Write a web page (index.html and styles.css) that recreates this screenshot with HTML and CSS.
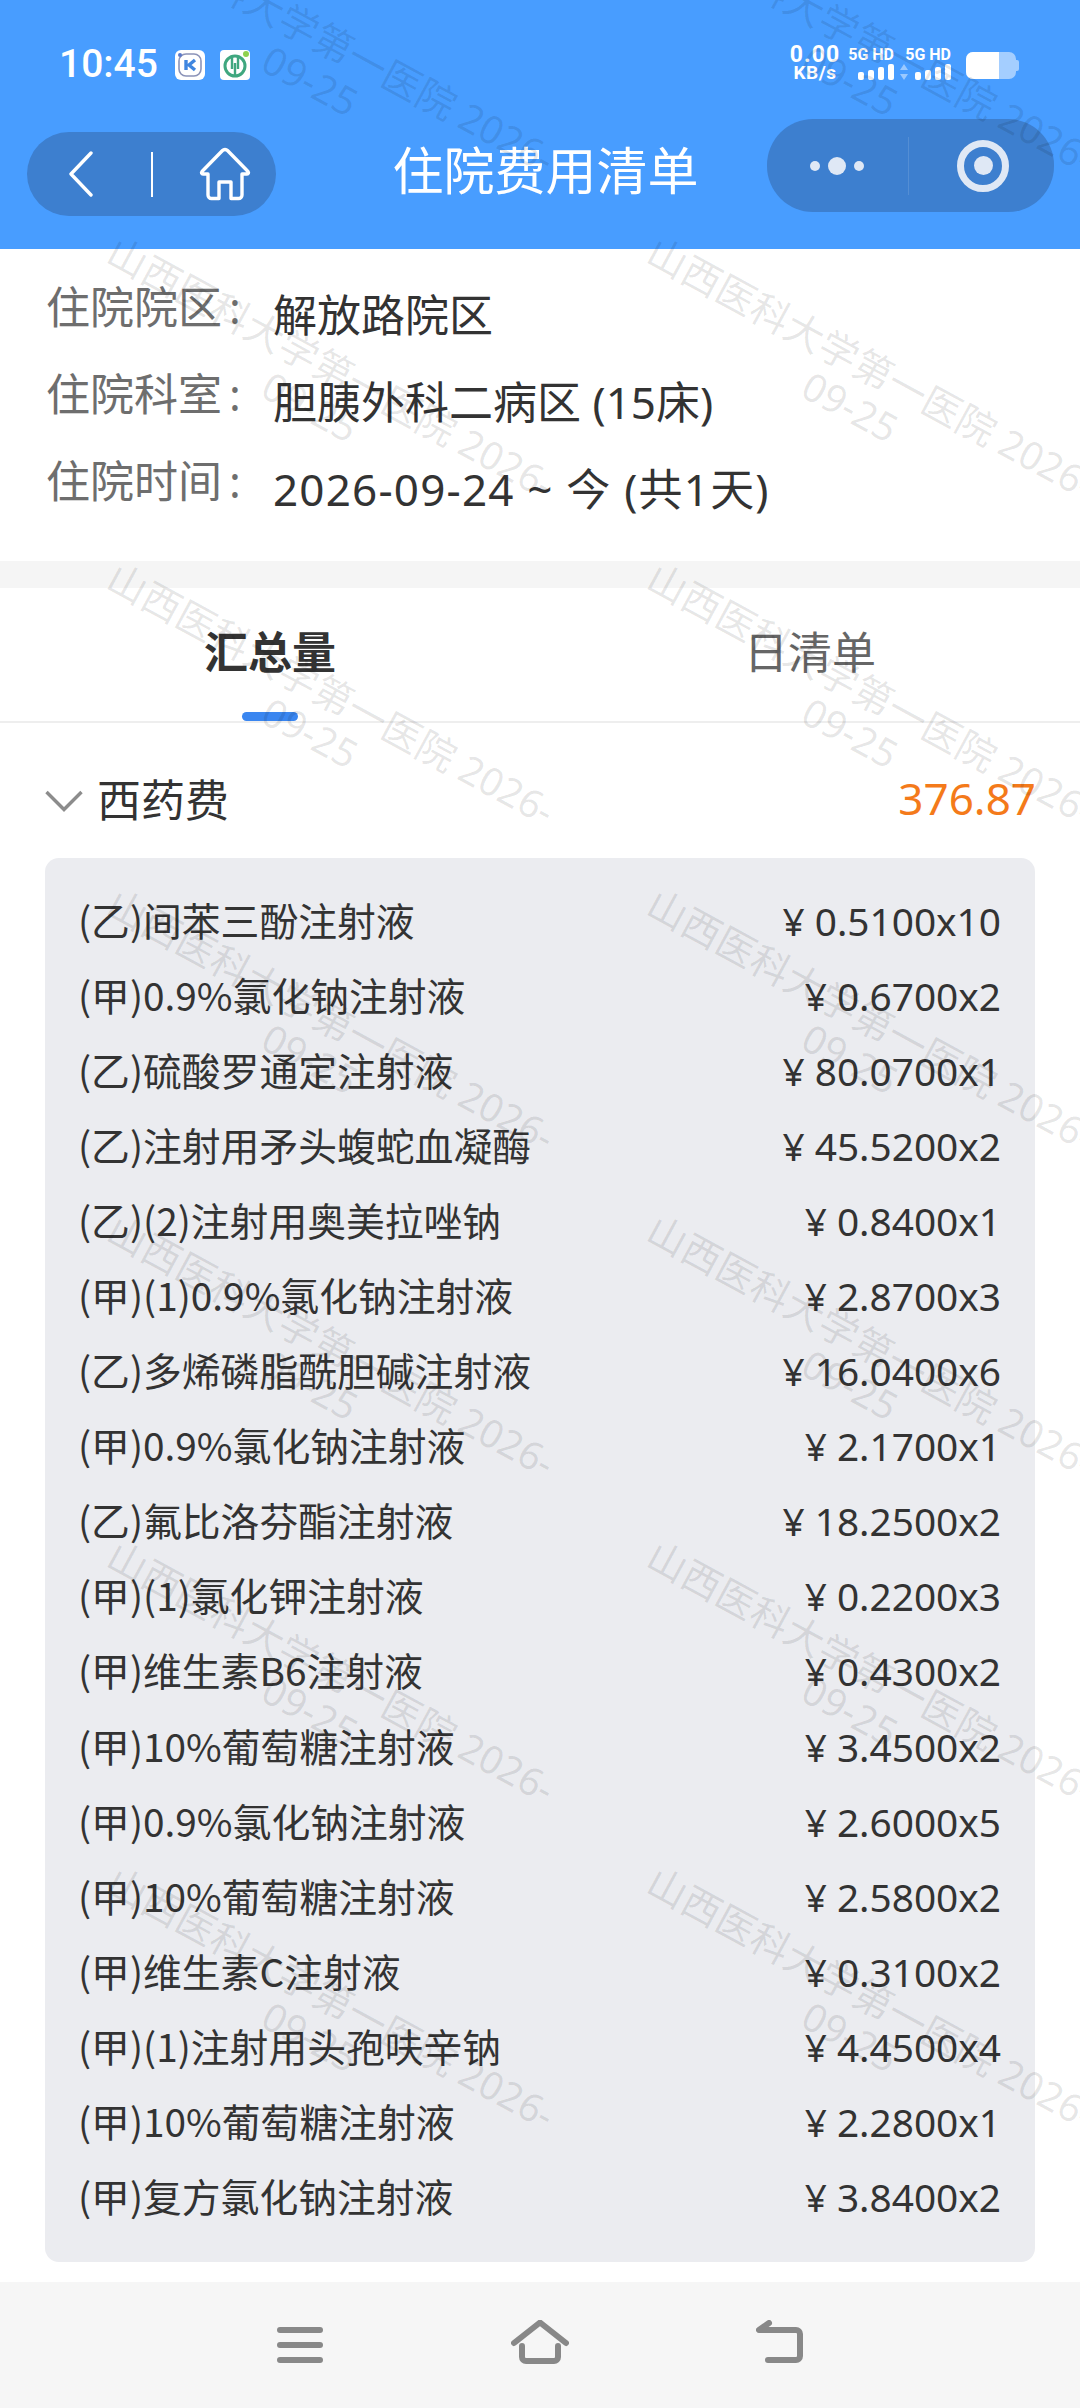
FILE: index.html
```html
<!DOCTYPE html>
<html lang="zh-CN">
<head>
    <meta charset="UTF-8">
    <meta name="viewport" content="width=device-width, initial-scale=1.0">
    <title>住院费用清单</title>
    <link rel="stylesheet" href="styles.css">
</head>
<body>
    <div class="page">
        <header class="top">
            <div class="status-bar">
                <div class="status-left">
                    <span class="time">10:45</span>
                    <svg class="app-icon" viewBox="0 0 30 30">
                        <rect width="30" height="30" rx="6" fill="#fff"/>
                        <rect x="4" y="4" width="22" height="22" rx="7" fill="none" stroke="#8b93b8" stroke-width="1.6"/>
                        <path d="M11 10v10M20 10l-6 5 6 5" fill="none" stroke="#3f86e0" stroke-width="3.4"/>
                        <circle cx="5" cy="5" r="2" fill="#5b79c9"/>
                    </svg>
                    <svg class="app-icon" viewBox="0 0 30 30">
                        <rect width="30" height="30" rx="4" fill="#fff"/>
                        <circle cx="15" cy="16" r="10" fill="none" stroke="#3fa77f" stroke-width="3"/>
                        <path d="M12 7v12M18 7v12M15 13v13" fill="none" stroke="#3fa77f" stroke-width="2.4"/>
                        <circle cx="26" cy="4" r="3" fill="#8fd14f"/>
                    </svg>
                </div>
                <div class="status-right">
                    <div class="speed"><span>0.00</span><span class="speed-unit">KB/s</span></div>
                    <div class="signal">
                        <span class="signal-name">5G HD</span>
                        <span class="bars"><i class="b1"></i><i class="b2"></i><i class="b3"></i><i class="b4"></i></span>
                    </div>
                    <div class="signal">
                        <span class="signal-name">5G HD</span>
                        <span class="bars"><svg class="arrows" viewBox="0 0 10 16"><path d="M5 0l4 6H1zM5 16l4-6H1z" fill="#fff" fill-opacity=".45"/></svg><i class="b1"></i><i class="b2"></i><i class="b3"></i><i class="b4"></i></span>
                    </div>
                    <div class="battery"><span class="battery-fill"></span></div>
                </div>
            </div>
            <div class="nav-row">
                <div class="pill pill-left">
                    <svg class="back-icon" viewBox="0 0 24 46"><path d="M22 2L2 23l20 21" fill="none" stroke="#fff" stroke-width="3.4" stroke-linecap="round" stroke-linejoin="round"/></svg>
                    <span class="pill-line"></span>
                    <svg class="home-icon" viewBox="0 0 52 54"><path d="M23.5 3.5a3.5 3.5 0 0 1 5 0L49 24.500c1 1.200.4 2.500-1 2.500h-5v21a3.500 3.500 0 0 1-3.500 3.500H32V35H20v16.500h-7.500A3.500 3.500 0 0 1 9 48V27H4c-1.400 0-2-1.300-1-2.500z" fill="none" stroke="#fff" stroke-width="3.400" stroke-linejoin="round"/></svg>
                </div>
                <h1 class="title">住院费用清单</h1>
                <div class="pill pill-right">
                    <div class="dots"><i class="dot"></i><i class="dot dot-big"></i><i class="dot"></i></div>
                    <span class="pill-line-faint"></span>
                    <div class="target"><i></i></div>
                </div>
            </div>
        </header>

        <section class="info">
            <div class="info-row"><span class="info-label">住院院区<span class="info-colon">:</span></span><span class="info-value">解放路院区</span></div>
            <div class="info-row"><span class="info-label">住院科室<span class="info-colon">:</span></span><span class="info-value">胆胰外科二病区 (15床)</span></div>
            <div class="info-row"><span class="info-label">住院时间<span class="info-colon">:</span></span><span class="info-value info-date">2026-09-24 ~ 今 (共1天)</span></div>
        </section>

        <div class="tabs">
            <div class="tab active">汇总量</div>
            <div class="tab">日清单</div>
        </div>

        <div class="group-head">
            <svg class="chevron" viewBox="0 0 38 22"><path d="M1.500 2L19 19.500 36.500 2" fill="none" stroke="#8c8c8c" stroke-width="3.400"/></svg>
            <span class="group-name">西药费</span>
            <span class="group-total">376.87</span>
        </div>

        <div class="panel">
            <div class="item"><span class="item-name">(乙)间苯三酚注射液</span><span>¥ 0.5100x10</span></div>
            <div class="item"><span class="item-name">(甲)0.9%氯化钠注射液</span><span>¥ 0.6700x2</span></div>
            <div class="item"><span class="item-name">(乙)硫酸罗通定注射液</span><span>¥ 80.0700x1</span></div>
            <div class="item"><span class="item-name">(乙)注射用矛头蝮蛇血凝酶</span><span>¥ 45.5200x2</span></div>
            <div class="item"><span class="item-name">(乙)(2)注射用奥美拉唑钠</span><span>¥ 0.8400x1</span></div>
            <div class="item"><span class="item-name">(甲)(1)0.9%氯化钠注射液</span><span>¥ 2.8700x3</span></div>
            <div class="item"><span class="item-name">(乙)多烯磷脂酰胆碱注射液</span><span>¥ 16.0400x6</span></div>
            <div class="item"><span class="item-name">(甲)0.9%氯化钠注射液</span><span>¥ 2.1700x1</span></div>
            <div class="item"><span class="item-name">(乙)氟比洛芬酯注射液</span><span>¥ 18.2500x2</span></div>
            <div class="item"><span class="item-name">(甲)(1)氯化钾注射液</span><span>¥ 0.2200x3</span></div>
            <div class="item"><span class="item-name">(甲)维生素B6注射液</span><span>¥ 0.4300x2</span></div>
            <div class="item"><span class="item-name">(甲)10%葡萄糖注射液</span><span>¥ 3.4500x2</span></div>
            <div class="item"><span class="item-name">(甲)0.9%氯化钠注射液</span><span>¥ 2.6000x5</span></div>
            <div class="item"><span class="item-name">(甲)10%葡萄糖注射液</span><span>¥ 2.5800x2</span></div>
            <div class="item"><span class="item-name">(甲)维生素C注射液</span><span>¥ 0.3100x2</span></div>
            <div class="item"><span class="item-name">(甲)(1)注射用头孢呋辛钠</span><span>¥ 4.4500x4</span></div>
            <div class="item"><span class="item-name">(甲)10%葡萄糖注射液</span><span>¥ 2.2800x1</span></div>
            <div class="item"><span class="item-name">(甲)复方氯化钠注射液</span><span>¥ 3.8400x2</span></div>
        </div>

        <footer class="sys-nav">
            <div class="sys-menu"><i></i><i></i><i></i></div>
            <svg class="sys-home" viewBox="0 0 58 44"><path d="M3 23L29 2.500 55 23M11 26v11a4 4 0 0 0 4 4h28a4 4 0 0 0 4-4V26" fill="none" stroke="#888" stroke-width="6" stroke-linecap="round" stroke-linejoin="round"/></svg>
            <svg class="sys-back" viewBox="0 0 48 44"><path d="M13 3L3 10h37a4 4 0 0 1 4 4v22a4 4 0 0 1-4 4H12" fill="none" stroke="#888" stroke-width="6" stroke-linecap="round" stroke-linejoin="round"/></svg>
        </footer>

        <!-- watermark over the whole page -->
        <div class="watermark">
            <div class="wm-grid">
                <div class="wm"><span>山西医科大学第一医院 2026-<br>09-25</span></div>
                <div class="wm"><span>山西医科大学第一医院 2026-<br>09-25</span></div>
                <div class="wm"><span>山西医科大学第一医院 2026-<br>09-25</span></div>
                <div class="wm"><span>山西医科大学第一医院 2026-<br>09-25</span></div>
                <div class="wm"><span>山西医科大学第一医院 2026-<br>09-25</span></div>
                <div class="wm"><span>山西医科大学第一医院 2026-<br>09-25</span></div>
                <div class="wm"><span>山西医科大学第一医院 2026-<br>09-25</span></div>
                <div class="wm"><span>山西医科大学第一医院 2026-<br>09-25</span></div>
                <div class="wm"><span>山西医科大学第一医院 2026-<br>09-25</span></div>
                <div class="wm"><span>山西医科大学第一医院 2026-<br>09-25</span></div>
                <div class="wm"><span>山西医科大学第一医院 2026-<br>09-25</span></div>
                <div class="wm"><span>山西医科大学第一医院 2026-<br>09-25</span></div>
                <div class="wm"><span>山西医科大学第一医院 2026-<br>09-25</span></div>
                <div class="wm"><span>山西医科大学第一医院 2026-<br>09-25</span></div>
            </div>
        </div>
    </div>
</body>
</html>
```

FILE: styles.css
```css
* {
    box-sizing: border-box;
}
body {
    margin: 0;
    background-color: #fff;
    font-family: "Noto Sans", "Noto Sans CJK SC", sans-serif;
    color: #333;
}
.page {
    position: relative;
    display: flex;
    flex-direction: column;
    width: 1080px;
    height: 2408px;
    overflow: hidden;
}

/* top blue area */
.top {
    height: 249px;
    background-color: #489dff;
    color: #fff;
}
.status-bar {
    display: flex;
    justify-content: space-between;
    height: 112px;
    padding: 46px 64px 0 59px;
}
.status-left {
    display: flex;
    align-items: flex-start;
    gap: 15px;
}
.time {
    font-family: Roboto, sans-serif;
    font-size: 39px;
    font-weight: 500;
    line-height: 36px;
    margin-right: 2px;
}
.app-icon {
    width: 30px;
    height: 30px;
    margin-top: 4px;
}
.status-right {
    display: flex;
    align-items: flex-start;
}
.speed {
    display: flex;
    flex-direction: column;
    align-items: center;
    width: 52px;
    margin-right: 6px;
    font-family: Roboto, sans-serif;
    font-size: 23px;
    font-weight: 700;
    line-height: 18px;
    letter-spacing: 1px;
}
.speed-unit {
    font-size: 19px;
    letter-spacing: .5px;
}
.signal {
    display: flex;
    flex-direction: column;
    align-items: flex-end;
    width: 47px;
    margin-right: 10px;
}
.signal-name {
    font-family: Roboto, sans-serif;
    font-size: 16px;
    font-weight: 700;
    line-height: 17px;
    white-space: nowrap;
}
.bars {
    display: flex;
    align-items: flex-end;
    gap: 4px;
    height: 17px;
}
.bars i {
    display: block;
    width: 6px;
    border-radius: 2px;
    background-color: #fff;
}
.b1 { height: 8px; }
.b2 { height: 10px; }
.b3 { height: 13px; }
.b4 { height: 16px; }
.arrows {
    width: 10px;
    height: 16px;
    margin-right: 2px;
}
.battery {
    position: relative;
    width: 50px;
    height: 27px;
    margin: 6px 0 0 5px;
    border-radius: 7px;
    background-color: rgba(255, 255, 255, .5);
}
.battery::after {
    content: "";
    position: absolute;
    left: 50px;
    top: 8px;
    width: 3px;
    height: 11px;
    border-radius: 0 2px 2px 0;
    background-color: rgba(255, 255, 255, .5);
}
.battery-fill {
    display: block;
    width: 33px;
    height: 27px;
    border-radius: 7px 0 0 7px;
    background-color: #fff;
}

.nav-row {
    display: flex;
    align-items: flex-start;
    padding: 0 26px 0 27px;
}
.pill {
    flex: none;
    display: flex;
    align-items: center;
    background-color: #3d7fcf;
}
.pill-left {
    width: 249px;
    height: 84px;
    margin-top: 20px;
    padding-left: 42px;
    border-radius: 42px;
}
.back-icon {
    width: 24px;
    height: 46px;
}
.pill-line {
    width: 2px;
    height: 45px;
    margin-left: 58px;
    background-color: #fff;
}
.home-icon {
    width: 52px;
    height: 54px;
    margin-left: 46px;
}
.title {
    flex: 1;
    margin: 29px 0 0;
    padding-left: 48px;
    font-size: 51px;
    font-weight: 400;
    line-height: 58px;
    text-align: center;
}
.pill-right {
    width: 287px;
    height: 93px;
    margin-top: 7px;
    border-radius: 46px;
}
.dots {
    display: flex;
    align-items: center;
    gap: 8px;
    margin-left: 43px;
}
.dot {
    display: block;
    width: 10px;
    height: 10px;
    border-radius: 50%;
    background-color: #dfe8f5;
}
.dot-big {
    width: 18px;
    height: 18px;
}
.pill-line-faint {
    width: 1px;
    height: 58px;
    margin-left: 44px;
    background-color: rgba(255, 255, 255, .12);
}
.target {
    display: flex;
    align-items: center;
    justify-content: center;
    width: 52px;
    height: 52px;
    margin-left: 48px;
    border: 7px solid #dfe8f5;
    border-radius: 50%;
}
.target i {
    display: block;
    width: 19px;
    height: 19px;
    border-radius: 50%;
    background-color: #dfe8f5;
}

/* hospital info */
.info {
    height: 312px;
    padding: 25px 0 0 46px;
}
.info-row {
    display: flex;
    margin-bottom: 16px;
    font-size: 44px;
    line-height: 60px;
}
.info-label {
    width: 227px;
    padding-top: 3px;
    color: #6e6e6e;
}
.info-colon {
    margin-left: 7px;
}
.info-value {
    padding-top: 11px;
    color: #333;
}
.info-date {
    letter-spacing: 1.2px;
}

/* tabs */
.tabs {
    display: flex;
    border-top: 27px solid #f5f5f5;
    border-bottom: 2px solid #eee;
}
.tab {
    position: relative;
    flex: 1;
    height: 133px;
    font-size: 44px;
    line-height: 128px;
    text-align: center;
    color: #666;
}
.tab.active {
    font-weight: 700;
    color: #333;
}
.tab.active::after {
    content: "";
    position: absolute;
    left: 242px;
    bottom: 0;
    width: 56px;
    height: 9px;
    border-radius: 5px;
    background-color: #3a86f0;
}

.group-head {
    display: flex;
    align-items: center;
    height: 60px;
    margin-top: 45px;
    padding: 0 44px 0 45px;
    font-size: 44px;
}
.chevron {
    width: 38px;
    height: 22px;
    margin-top: 6px;
    margin-right: 14px;
}
.group-total {
    margin-left: auto;
    color: #f47a1a;
}

/* list of drugs */
.panel {
    height: 1404px;
    margin: 30px 45px 0;
    padding: 24px 34px 0 33px;
    border-radius: 14px;
    background-color: #ebecf0;
}
.item {
    display: flex;
    align-items: baseline;
    justify-content: space-between;
    height: 75.06px;
    font-size: 38.8px;
    line-height: 75px;
    color: #333;
}
.item-name {
    font-family: "Noto Sans CJK SC", sans-serif;
}

/* phone navigation */
.sys-nav {
    position: relative;
    flex: 1;
    margin-top: 20px;
    background-color: #f6f6f6;
}
.sys-menu {
    position: absolute;
    left: 277px;
    top: 45px;
    display: flex;
    flex-direction: column;
    gap: 9px;
}
.sys-menu i {
    display: block;
    width: 46px;
    height: 6px;
    border-radius: 3px;
    background-color: #888;
}
.sys-home {
    position: absolute;
    left: 511px;
    top: 38px;
    width: 58px;
    height: 44px;
}
.sys-back {
    position: absolute;
    left: 756px;
    top: 38px;
    width: 48px;
    height: 44px;
}

/* watermark */
.watermark {
    position: absolute;
    left: 0;
    top: 0;
    width: 1080px;
    height: 2408px;
    overflow: hidden;
    pointer-events: none;
}
.wm-grid {
    display: grid;
    grid-template-columns: repeat(2, 540px);
    grid-auto-rows: 326px;
    width: 1080px;
    margin: -102px 0 0 51px;
}
.wm {
    display: flex;
    align-items: center;
    justify-content: center;
}
.wm span {
    font-size: 39px;
    line-height: 44px;
    text-align: center;
    white-space: nowrap;
    color: rgba(0, 0, 0, .1);
    transform: rotate(28.5deg);
}
```
